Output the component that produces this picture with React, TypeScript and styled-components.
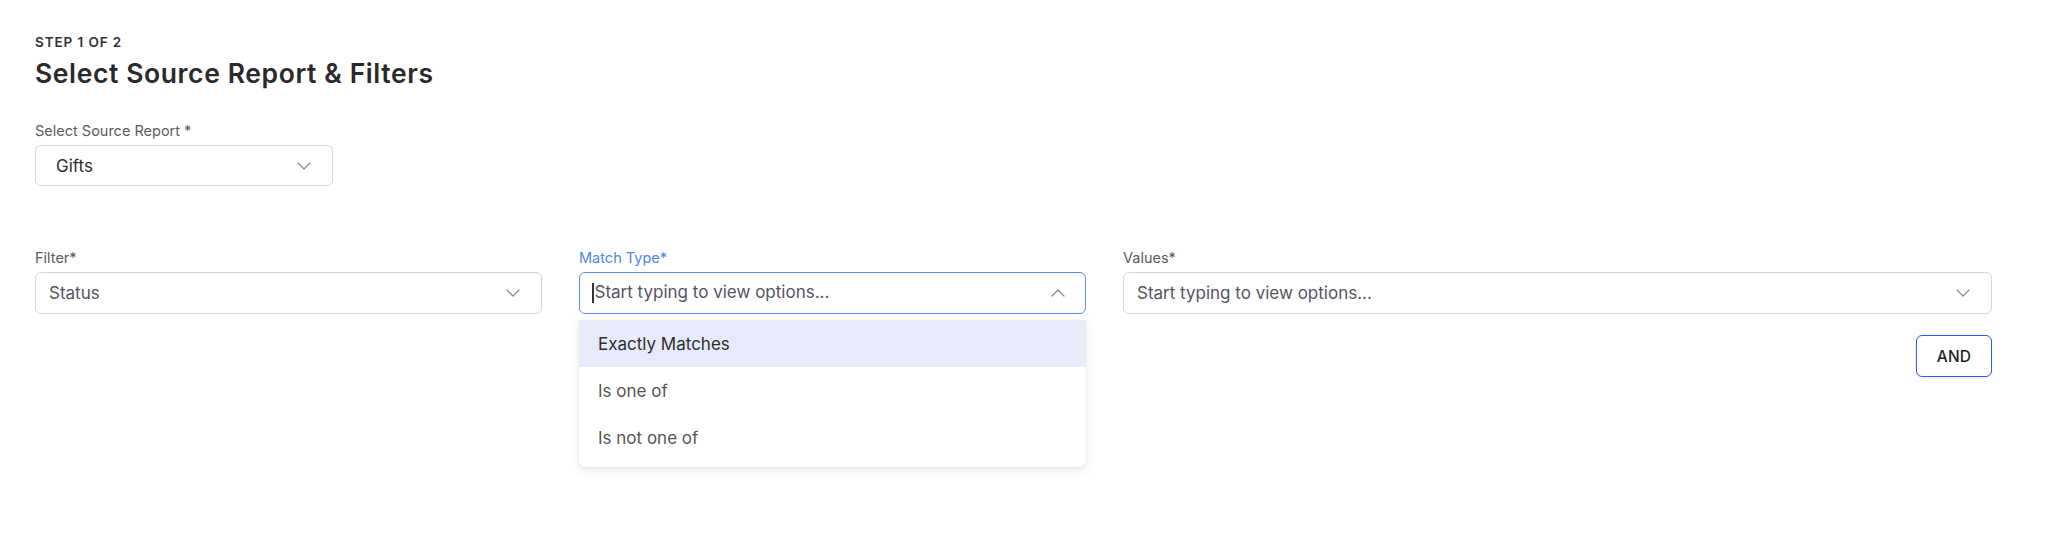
import React from "react";
import styled, { createGlobalStyle } from "styled-components";

const Global = createGlobalStyle`
  html, body { margin: 0; padding: 0; background: #ffffff; }
  body { font-family: Inter, "Noto Sans", "Liberation Sans", sans-serif; -webkit-font-smoothing: antialiased; }
  * { box-sizing: border-box; }
`;

const Page = styled.div`
  width: 2056px;
  height: 556px;
  padding: 34px 64px 0 35px;
  display: flex;
  flex-direction: column;
`;

const Step = styled.div`
  font-size: 13.5px;
  font-weight: 600;
  line-height: 16px;
  color: #333333;
  letter-spacing: 0.9px;
`;

const Title = styled.h1`
  margin: 8px 0 0 0;
  font-size: 26.5px;
  font-weight: 600;
  line-height: 31px;
  color: #2a2a2a;
  letter-spacing: 0.6px;
`;

const Field = styled.div<{ $width?: string }>`
  display: flex;
  flex-direction: column;
  position: relative;
  width: ${(p) => p.$width || "auto"};
`;

const Label = styled.label<{ $active?: boolean }>`
  font-size: 14.5px;
  line-height: 17px;
  height: 17px;
  color: ${(p) => (p.$active ? "#4f86ec" : "#5c5c5c")};
  margin-bottom: 6px;
`;

const SourceSection = styled.div`
  margin-top: 33px;
`;

const Box = styled.div<{ $focused?: boolean; $height?: number; $pad?: number }>`
  height: ${(p) => p.$height || 42}px;
  border: ${(p) => (p.$focused ? "1.5px solid #5b8def" : "1px solid #d5d5d8")};
  border-radius: 6px;
  background: #fff;
  display: flex;
  align-items: center;
  padding: 0 ${(p) => (p.$focused ? 20 : 21)}px 0 ${(p) => p.$pad ?? 13}px;
  font-size: 17px;
`;

const Value = styled.span<{ $tone?: "dark" | "muted" }>`
  flex: 1;
  color: ${(p) => (p.$tone === "dark" ? "#2e2e2e" : "#545466")};
  white-space: nowrap;
`;

const Caret = styled.span`
  display: inline-block;
  width: 1.5px;
  height: 20px;
  background: #333;
  margin-right: 1px;
  vertical-align: middle;
  transform: translateY(-1px);
`;

const FilterRow = styled.div`
  margin-top: 63px;
  display: grid;
  grid-template-columns: 507px 507px 1fr;
  column-gap: 37px;
  align-items: start;
`;

const Menu = styled.ul`
  position: absolute;
  top: 71px;
  left: 0;
  right: 0;
  margin: 0;
  padding: 0 0 6px 0;
  list-style: none;
  background: #fff;
  border-radius: 0 0 7px 7px;
  box-shadow: 0 3px 10px rgba(0, 0, 0, 0.09), 0 1px 3px rgba(0, 0, 0, 0.05);
  z-index: 5;
`;

const Option = styled.li<{ $active?: boolean }>`
  height: 47px;
  display: flex;
  align-items: center;
  padding-left: 19px;
  font-size: 17px;
  color: ${(p) => (p.$active ? "#2e2e2e" : "#555555")};
  background: ${(p) => (p.$active ? "#e7eaf8" : "#fff")};
`;

const Actions = styled.div`
  display: flex;
  justify-content: flex-end;
  margin-top: 21px;
`;

const AndButton = styled.button`
  width: 76px;
  height: 42px;
  border: 1.5px solid #2f5fe3;
  border-radius: 6px;
  background: #fff;
  font-family: inherit;
  font-size: 15.5px;
  font-weight: 500;
  color: #1f1f1f;
  letter-spacing: 0.2px;
  box-shadow: 0 1px 3px rgba(0, 0, 0, 0.08);
`;

const Chevron = ({ up }: { up?: boolean }) => (
  <svg width="14" height="8" viewBox="0 0 14 8" fill="none">
    <polyline
      points={up ? "1,7 7,1 13,7" : "1,1 7,7 13,1"}
      stroke="#8a8a8a"
      strokeWidth="1.3"
      strokeLinecap="round"
      strokeLinejoin="round"
    />
  </svg>
);

export default function App() {
  return (
    <>
      <Global />
      <Page>
        <Step>STEP 1 OF 2</Step>
        <Title>Select Source Report &amp; Filters</Title>

        <SourceSection>
          <Field $width="298px">
            <Label>Select Source Report *</Label>
            <Box $height={41} $pad={20}>
              <Value $tone="dark">Gifts</Value>
              <Chevron />
            </Box>
          </Field>
        </SourceSection>

        <FilterRow>
          <Field>
            <Label>Filter*</Label>
            <Box>
              <Value>Status</Value>
              <Chevron />
            </Box>
          </Field>

          <Field>
            <Label $active>Match Type*</Label>
            <Box $focused $pad={12}>
              <Value>
                <Caret />
                Start typing to view options...
              </Value>
              <Chevron up />
            </Box>
            <Menu>
              <Option $active>Exactly Matches</Option>
              <Option>Is one of</Option>
              <Option>Is not one of</Option>
            </Menu>
          </Field>

          <Field>
            <Label>Values*</Label>
            <Box>
              <Value>Start typing to view options...</Value>
              <Chevron />
            </Box>
            <Actions>
              <AndButton>AND</AndButton>
            </Actions>
          </Field>
        </FilterRow>
      </Page>
    </>
  );
}
